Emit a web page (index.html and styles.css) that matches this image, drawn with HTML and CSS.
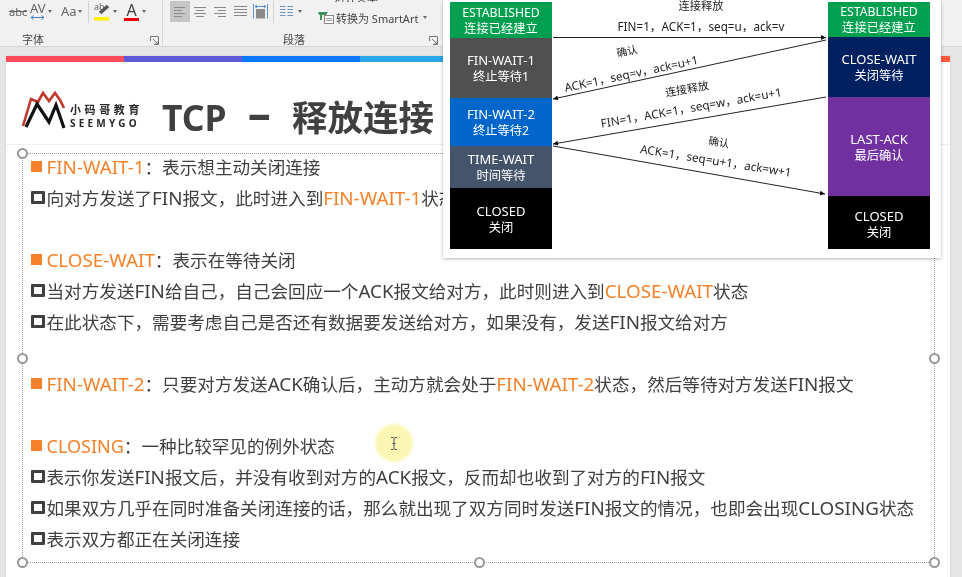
FILE: index.html
```html
<!DOCTYPE html>
<html lang="zh-CN">
<head>
<meta charset="utf-8">
<title>TCP 释放连接</title>
<link rel="stylesheet" href="styles.css">
</head>
<body>
<div class="app">
  <header class="ribbon">
    <section class="group group-font">
      <div class="tools tools-font">
        <span class="tool strike">abc</span>
        <span class="tool spacing">AV<svg class="spacing-arrow" width="15" height="5" viewBox="0 0 15 5"><path d="M1 2.5H14M1 2.5L3.5 .5M1 2.5L3.5 4.5M14 2.5L11.5 .5M14 2.5L11.5 4.5" fill="none" stroke="#3f83c4" stroke-width="1"/></svg></span>
        <span class="caret"></span>
        <span class="tool case">Aa</span>
        <span class="caret"></span>
        <span class="vsep"></span>
        <span class="tool marker"><svg class="marker-icon" width="16" height="19" viewBox="0 0 16 19"><text x="0" y="8" class="marker-text">ab</text><path d="M6 11L14 4" stroke="#555" stroke-width="3.5"/><rect y="15" width="15" height="3.5" fill="#fff200"/></svg></span>
        <span class="caret"></span>
        <span class="tool fontcolor">A<i class="red-bar"></i></span>
        <span class="caret"></span>
      </div>
      <div class="group-label">字体<svg class="launcher" width="9" height="9" viewBox="0 0 9 9"><path d="M.5 5V.5H8.5V8.5H4M3 3L8 8M8 5V8H5" fill="none" stroke="#777"/></svg></div>
    </section>
    <section class="group group-para">
      <div class="tools tools-para">
        <span class="align active"><svg width="12" height="10" viewBox="0 0 12 10"><path d="M0 .5H11M0 3.5H8M0 6.5H11M0 9.5H8" stroke="#8a8a8a"/></svg></span>
        <span class="align"><svg width="12" height="10" viewBox="0 0 12 10"><path d="M0 .5H12M2 3.5H10M0 6.5H12M2 9.5H10" stroke="#8a8a8a"/></svg></span>
        <span class="align"><svg width="12" height="10" viewBox="0 0 12 10"><path d="M0 .5H12M4 3.5H12M0 6.5H12M4 9.5H12" stroke="#8a8a8a"/></svg></span>
        <span class="align"><svg width="13" height="11" viewBox="0 0 13 11"><path d="M0 .5H13M0 3.5H13M0 6.5H13M0 9.5H13" stroke="#8a8a8a"/></svg></span>
        <span class="align"><svg width="15" height="15" viewBox="0 0 15 15"><rect x="3" y="5" width="9" height="9.5" fill="#8a8a8a"/><path d="M.5 0V14.5M14.5 0V14.5M2 2.5H13M2 2.5L4 1M2 2.5L4 4M13 2.5L11 1M13 2.5L11 4" fill="none" stroke="#5b93c9"/></svg></span>
        <span class="vsep vsep-para"></span>
        <span class="columns"><svg width="13" height="11" viewBox="0 0 13 11"><path d="M0 .5H5.5M7.5 .5H13M0 3.5H5.5M7.5 3.5H13M0 6.5H5.5M7.5 6.5H13M0 9.5H5.5M7.5 9.5H13" stroke="#6d93c2"/></svg></span>
        <span class="caret caret-columns"></span>
        <div class="text-tools">
          <div class="text-tool cut-tool">
            <svg width="14" height="6" viewBox="0 0 14 6"><path d="M1 0V3H12V0M6 0V3" fill="none" stroke="#4a82b8"/></svg>
            <span>对齐文本</span>
          </div>
          <div class="text-tool">
            <svg width="16" height="13" viewBox="0 0 16 13"><path d="M0 1H10L8 4H1Z" fill="#3f8f5e"/><path d="M3 4V9" stroke="#3f8f5e" stroke-width="2"/><rect x="6.5" y="4.5" width="9" height="8" fill="#fff" stroke="#888"/><path d="M8 7.5H14M8 9.5H14" stroke="#999"/></svg>
            <span>转换为 SmartArt</span>
            <span class="caret"></span>
          </div>
        </div>
      </div>
      <div class="group-label">段落<svg class="launcher" width="9" height="9" viewBox="0 0 9 9"><path d="M.5 5V.5H8.5V8.5H4M3 3L8 8M8 5V8H5" fill="none" stroke="#777"/></svg></div>
    </section>
  </header>

  <main class="workspace">
    <article class="slide">
      <div class="stripe">
        <i class="s-red"></i><i class="s-purple"></i><i class="s-blue"></i><i class="s-sky"></i><i class="s-sky"></i><i class="s-sky"></i><i class="s-sky"></i><i class="s-orange"></i>
      </div>
      <div class="slide-head">
        <div class="logo">
          <svg class="logo-mark" width="44" height="37" viewBox="0 0 44 37"><path d="M0 34L8 7L15 10L20 1L26 9L32 1L37 8L41 16" fill="none" stroke="#c0392b" stroke-width="2.6"/><path d="M3 35L14 12L26 30L33 13L41 36" fill="none" stroke="#111" stroke-width="3.2"/></svg>
          <div class="logo-text">
            <span class="logo-cn">小码哥教育</span>
            <span class="logo-en">SEEMYGO</span>
          </div>
        </div>
        <h1 class="title">TCP <span class="title-dash">–</span> 释放连接</h1>
      </div>
      <div class="textbox">
        <ul class="lines">
          <li class="line"><i class="sq"></i><span><b>FIN-WAIT-1</b>：表示想主动关闭连接</span></li>
          <li class="line"><i class="box"></i><span>向对方发送了<em>FIN</em>报文，此时进入到<b>FIN-WAIT-1</b>状态</span></li>
          <li class="line"></li>
          <li class="line"><i class="sq"></i><span><b>CLOSE-WAIT</b>：表示在等待关闭</span></li>
          <li class="line"><i class="box"></i><span>当对方发送<em>FIN</em>给自己，自己会回应一个<em>ACK</em>报文给对方，此时则进入到<b>CLOSE-WAIT</b>状态</span></li>
          <li class="line"><i class="box"></i><span>在此状态下，需要考虑自己是否还有数据要发送给对方，如果没有，发送<em>FIN</em>报文给对方</span></li>
          <li class="line"></li>
          <li class="line"><i class="sq"></i><span><b>FIN-WAIT-2</b>：只要对方发送<em>ACK</em>确认后，主动方就会处于<b>FIN-WAIT-2</b>状态，然后等待对方发送<em>FIN</em>报文</span></li>
          <li class="line"></li>
          <li class="line"><i class="sq"></i><span><b class="narrow">CLOSING</b>：一种比较罕见的例外状态</span></li>
          <li class="line"><i class="box"></i><span>表示你发送<em>FIN</em>报文后，并没有收到对方的<em>ACK</em>报文，反而却也收到了对方的<em>FIN</em>报文</span></li>
          <li class="line"><i class="box"></i><span>如果双方几乎在同时准备关闭连接的话，那么就出现了双方同时发送<em>FIN</em>报文的情况，也即会出现<em>CLOSING</em>状态</span></li>
          <li class="line"><i class="box"></i><span>表示双方都正在关闭连接</span></li>
        </ul>
        <i class="handle h-tl"></i><i class="handle h-ml"></i><i class="handle h-bl"></i><i class="handle h-bm"></i><i class="handle h-mr"></i><i class="handle h-br"></i>
      </div>
    </article>
  </main>

  <aside class="popup">
    <div class="state-col col-left">
      <div class="state st-est-l">ESTABLISHED<br>连接已经建立</div>
      <div class="state st-fw1"><span class="lat">FIN-WAIT-1</span><br>终止等待1</div>
      <div class="state st-fw2"><span class="lat">FIN-WAIT-2</span><br>终止等待2</div>
      <div class="state st-tw"><span class="lat">TIME-WAIT</span><br>时间等待</div>
      <div class="state st-closed-l"><span class="lat">CLOSED</span><br>关闭</div>
    </div>
    <div class="messages">
      <svg class="arrows" width="276" height="258" viewBox="553 0 276 258">
        <defs>
          <marker id="tip" markerWidth="6" markerHeight="6" refX="5" refY="2.5" orient="auto" markerUnits="userSpaceOnUse"><path d="M0 0L5 2.5L0 5Z" fill="#111"/></marker>
        </defs>
        <g stroke="#222" stroke-width="1" fill="none">
          <path d="M554 37.5H827" marker-end="url(#tip)"/>
          <path d="M827 40L554 99" marker-end="url(#tip)"/>
          <path d="M827 97L554 144" marker-end="url(#tip)"/>
          <path d="M554 146L826 194" marker-end="url(#tip)"/>
        </g>
      </svg>
      <span class="msg m1">连接释放</span>
      <span class="msg m2">FIN=1，ACK=1，seq=u，ack=v</span>
      <span class="msg m3">确认</span>
      <span class="msg m4">ACK=1，seq=v，ack=u+1</span>
      <span class="msg m5">连接释放</span>
      <span class="msg m6">FIN=1，ACK=1，seq=w，ack=u+1</span>
      <span class="msg m7">确认</span>
      <span class="msg m8">ACK=1，seq=u+1，ack=w+1</span>
    </div>
    <div class="state-col col-right">
      <div class="state st-est-r">ESTABLISHED<br>连接已经建立</div>
      <div class="state st-cw"><span class="lat">CLOSE-WAIT</span><br>关闭等待</div>
      <div class="state st-la"><span class="lat">LAST-ACK</span><br>最后确认</div>
      <div class="state st-closed-r"><span class="lat">CLOSED</span><br>关闭</div>
    </div>
  </aside>

  <div class="pointer">
    <svg width="8" height="13" viewBox="0 0 8 13"><path d="M1 .5H3.2L4 1.5L4.8 .5H7M4 1.5V11.5M1 12.5H3.2L4 11.5L4.8 12.5H7M2.5 6.5H5.5" fill="none" stroke="#555" stroke-width="1"/></svg>
  </div>
</div>
</body>
</html>
```

FILE: styles.css
```css
* { box-sizing: border-box; margin: 0; padding: 0; }
html, body { width: 962px; height: 577px; overflow: hidden; }
body {
  background: #e6e6e6;
  font-family: "Noto Sans", "Noto Sans CJK SC", sans-serif;
  color: #404040;
}
i { font-style: normal; display: block; }
em { font-style: normal; }
.app {
  position: relative;
  width: 962px;
  height: 577px;
  overflow: hidden;
  display: flex;
  flex-direction: column;
  filter: blur(.35px);
}

/* ribbon */
.ribbon {
  height: 47px;
  flex: none;
  display: flex;
  background: #f1f1f1;
  border-bottom: 1px solid #d6d6d6;
}
.group {
  position: relative;
  display: flex;
  flex-direction: column;
  justify-content: space-between;
  height: 46px;
  border-right: 1px solid #d8d8d8;
}
.group-font { width: 163px; }
.group-para { width: 281px; border-right: 0; }
.tools { display: flex; align-items: center; height: 23px; }
.tools-font { padding-left: 9px; }
.tools-para { padding-left: 7px; }
.group-label {
  position: relative;
  height: 20px;
  line-height: 27px;
  font-size: 11px;
  color: #444;
}
.group-font .group-label { padding-left: 22px; }
.group-para .group-label { padding-left: 120px; }
.launcher { position: absolute; top: 10px; right: 3px; }
.group-para .launcher { right: 6px; }
.tool { display: block; color: #666; line-height: 1; }
.strike { font-size: 11px; text-decoration: line-through; width: 15px; margin-right: 6px; }
.spacing { position: relative; width: 15px; font-size: 13px; height: 18px; margin-top: -2px; }
.spacing-arrow { position: absolute; left: 0; top: 13px; }
.case { font-size: 13px; width: 14px; margin-left: 9px; }
.caret {
  display: block;
  flex: none;
  width: 0;
  height: 0;
  margin-left: 3px;
  border: 2.5px solid transparent;
  border-top: 3px solid #666;
  border-bottom: 0;
}
.vsep { flex: none; width: 1px; height: 22px; background: #d4d4d4; margin: 0 5px 0 6px; }
.marker { height: 19px; }
.marker-icon { overflow: visible; }
.marker-text { font-size: 9px; fill: #666; font-family: "Noto Sans", sans-serif; }
.fontcolor { position: relative; width: 15px; height: 19px; margin-left: 7px; font-size: 16px; text-align: center; color: #444; }
.red-bar { position: absolute; left: 0; bottom: 0; width: 15px; height: 3.5px; background: #f00000; }
.align {
  flex: none;
  width: 20px;
  height: 21px;
  display: flex;
  align-items: center;
  justify-content: center;
}
.align.active { background: #c6c6c6; }
.vsep-para { margin: 0 6px 0 3px; }
.columns { display: flex; }
.caret-columns { margin-left: 5px; }
.text-tools {
  display: flex;
  flex-direction: column;
  align-self: flex-start;
  margin: -8px 0 0 16px;
  font-size: 11px;
  color: #444;
}
.text-tool { display: flex; align-items: center; gap: 2px; height: 15px; white-space: nowrap; }
.cut-tool { height: 10px; overflow: hidden; }
.text-tool + .text-tool { height: 17px; margin-top: 7px; }

/* slide */
.workspace { flex: 1; min-height: 0; padding: 9px 12px 0 6px; background: #e6e6e6; }
.slide { height: 530px; background: #fff; display: flex; flex-direction: column; box-shadow: 0 0 2px #ccc; }
.stripe { display: flex; height: 6px; flex: none; }
.stripe i { flex: 1; }
.s-red { background: #ff4a5c; }
.s-purple { background: #5f5ad8; }
.s-blue { background: #0078ff; }
.s-sky { background: #29a7e8; }
.s-orange { background: #ff5a3c; }
.slide-head {
  height: 83px;
  flex: none;
  display: flex;
  align-items: flex-start;
  border-bottom: 1px solid #efefef;
  padding: 30px 0 0 16px;
}
.logo { display: flex; width: 140px; flex: none; }
.logo-mark { flex: none; margin: 0 3px 0 1px; overflow: visible; }
.logo-text { display: flex; flex-direction: column; padding-top: 10px; color: #2a2a2a; }
.logo-cn { font-size: 11px; line-height: 15px; letter-spacing: 3.6px; font-weight: 700; white-space: nowrap; }
.logo-en { font-size: 10px; line-height: 13px; letter-spacing: 3.2px; font-weight: 700; }
.title {
  font-size: 35.5px;
  line-height: 50px;
  font-weight: 700;
  color: #404040;
  white-space: nowrap;
  word-spacing: 12px;
}
.title-dash { display: inline-block; font-size: 46px; line-height: 40px; vertical-align: 1px; }

/* body text */
.textbox {
  position: relative;
  margin: 8px 0 0 15.5px;
  width: 913px;
  height: 410px;
  border: 1px dotted #9a9a9a;
}
.lines { list-style: none; margin-top: -3px; }
.line {
  display: flex;
  align-items: center;
  height: 31px;
  font-size: 17.6px;
  white-space: nowrap;
  color: #404040;
}
.line b, .line em { font-size: 18.8px; line-height: 1; }
.line b { font-weight: 400; color: #f5822a; }
.line b.narrow { font-size: 18px; }
.sq { flex: none; width: 11px; height: 11px; margin: 0 5px 0 8px; background: #f5822a; }
.box { flex: none; width: 14px; height: 13px; margin: 0 2px 0 8px; border: 3px solid #404040; border-radius: 1px; }
.handle {
  position: absolute;
  width: 11px;
  height: 11px;
  border-radius: 50%;
  background: #fff;
  border: 2px solid #999;
}
.h-tl { left: -6px; top: -6px; }
.h-ml { left: -6px; top: 199px; }
.h-bl { left: -6px; bottom: -6px; }
.h-bm { left: 451px; bottom: -6px; }
.h-mr { right: -6px; top: 199px; }
.h-br { right: -6px; bottom: -6px; }

/* diagram popup */
.popup {
  position: absolute;
  left: 443px;
  top: 0;
  width: 498px;
  height: 258px;
  background: #fff;
  box-shadow: 0 1px 3px rgba(0,0,0,.3);
  display: flex;
  padding: 2px 11px 9px 7px;
}
.state-col { width: 102px; flex: none; display: flex; flex-direction: column; }
.state {
  display: block;
  flex: none;
  text-align: center;
  color: #fff;
  font-size: 12.3px;
  line-height: 16px;
  padding-top: var(--pad, 0);
}
.lat { font-size: 13px; }
.st-est-l { height: 36px; background: #00a050; --pad: 3px; }
.st-fw1 { height: 60px; background: #505050; --pad: 14px; }
.st-fw2 { height: 48px; background: #0066cc; --pad: 8px; }
.st-tw { height: 42px; background: #44546a; --pad: 5px; }
.st-closed-l { height: 61px; background: #000; --pad: 15px; }
.st-est-r { height: 35px; background: #00a050; --pad: 2px; }
.st-cw { height: 60px; background: #002060; --pad: 14px; }
.st-la { height: 99px; background: #7030a0; --pad: 34px; }
.st-closed-r { height: 53px; background: #000; --pad: 12px; }
.messages { position: relative; flex: 1; }
.arrows { position: absolute; left: 0; top: -2px; overflow: visible; }
.msg {
  position: absolute;
  white-space: nowrap;
  color: #222;
  line-height: 16px;
  font-size: 11.7px;
  transform: translate(-50%, -50%) rotate(var(--r, 0deg));
}
.m1 { left: 149px; top: 4px; font-size: 11.2px; }
.m2 { left: 149px; top: 24px; }
.m3 { left: 75px; top: 49px; font-size: 10.5px; --r: -12deg; }
.m4 { left: 79px; top: 71px; --r: -12deg; }
.m5 { left: 135px; top: 87px; font-size: 11px; --r: -10deg; }
.m6 { left: 139px; top: 105px; --r: -10deg; }
.m7 { left: 167px; top: 140px; font-size: 10.5px; --r: 9deg; }
.m8 { left: 164px; top: 158px; --r: 9deg; }

/* presenter cursor */
.pointer {
  position: absolute;
  left: 373px;
  top: 422px;
  width: 42px;
  height: 42px;
  border-radius: 50%;
  background: radial-gradient(circle closest-side, #fbf6b4 0 78%, rgba(251,246,180,.5) 90%, rgba(251,246,180,0) 100%);
  display: flex;
  align-items: center;
  justify-content: center;
}
```
